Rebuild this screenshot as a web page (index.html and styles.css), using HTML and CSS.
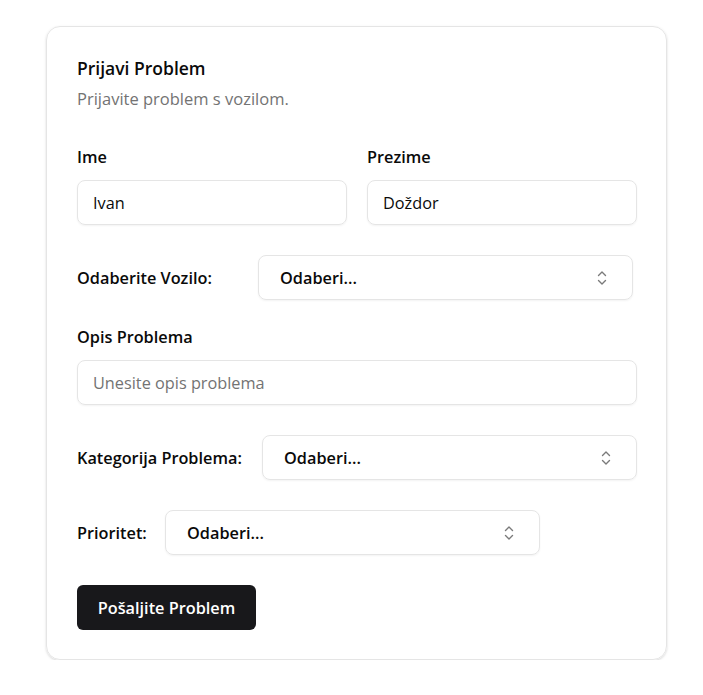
FILE: index.html
```html
<!DOCTYPE html>
<html lang="hr">
<head>
<meta charset="utf-8">
<link rel="stylesheet" href="styles.css">
</head>
<body>
<div class="card">
  <div class="header">
    <h1 class="title">Prijavi Problem</h1>
    <p class="subtitle">Prijavite problem s vozilom.</p>
  </div>
  <div class="row-two">
    <div class="field">
      <label class="label">Ime</label>
      <div class="input">Ivan</div>
    </div>
    <div class="field">
      <label class="label">Prezime</label>
      <div class="input">Doždor</div>
    </div>
  </div>
  <div class="select-row r-vozilo">
    <span class="label-inline">Odaberite Vozilo:</span>
    <div class="select"><span>Odaberi...</span>
      <svg class="chev" width="12" height="18" viewBox="0 0 12 18"><path d="M2.5 6.5 L6 3 L9.5 6.5 M2.5 11.5 L6 15 L9.5 11.5" fill="none" stroke="#7a7a7a" stroke-width="1.4" stroke-linecap="round" stroke-linejoin="round"/></svg>
    </div>
  </div>
  <div class="field f-opis">
    <label class="label">Opis Problema</label>
    <div class="input placeholder">Unesite opis problema</div>
  </div>
  <div class="select-row r-kat">
    <span class="label-inline">Kategorija Problema:</span>
    <div class="select"><span>Odaberi...</span>
      <svg class="chev" width="12" height="18" viewBox="0 0 12 18"><path d="M2.5 6.5 L6 3 L9.5 6.5 M2.5 11.5 L6 15 L9.5 11.5" fill="none" stroke="#7a7a7a" stroke-width="1.4" stroke-linecap="round" stroke-linejoin="round"/></svg>
    </div>
  </div>
  <div class="select-row r-prio">
    <span class="label-inline">Prioritet:</span>
    <div class="select"><span>Odaberi...</span>
      <svg class="chev" width="12" height="18" viewBox="0 0 12 18"><path d="M2.5 6.5 L6 3 L9.5 6.5 M2.5 11.5 L6 15 L9.5 11.5" fill="none" stroke="#7a7a7a" stroke-width="1.4" stroke-linecap="round" stroke-linejoin="round"/></svg>
    </div>
  </div>
  <button class="btn">Pošaljite Problem</button>
</div>
</body>
</html>
```

FILE: styles.css
```css
* { box-sizing: border-box; }
html, body { margin: 0; padding: 0; background: #fff; }
body {
  font-family: "Open Sans", "Noto Sans", sans-serif;
  color: #0a0a0a;
  padding: 26px 0 0 46px;
}
.card {
  width: 621px;
  height: 634px;
  border: 1px solid #e5e5e5;
  border-radius: 14px;
  box-shadow: 0 1px 3px rgba(0,0,0,0.10), 0 1px 2px rgba(0,0,0,0.06);
  padding: 29px 29px 29px 30px;
  display: flex;
  flex-direction: column;
}
.header { margin-bottom: 34px; }
.title {
  margin: 0;
  font-size: 17.5px;
  font-weight: 600;
  line-height: 24px;
}
.subtitle {
  margin: 7px 0 0;
  font-size: 16.5px;
  line-height: 24px;
  color: #737373;
}
.row-two {
  display: grid;
  grid-template-columns: 1fr 1fr;
  gap: 20px;
}
.field { display: flex; flex-direction: column; }
.label {
  font-size: 16.3px;
  font-weight: 600;
  line-height: 24px;
  margin-bottom: 11px;
}
.input {
  height: 45px;
  border: 1px solid #e5e5e5;
  border-radius: 8px;
  box-shadow: 0 1px 2px rgba(0,0,0,0.05);
  padding: 0 15px;
  display: flex;
  align-items: center;
  font-size: 16.3px;
}
.input.placeholder { color: #737373; }
.select-row {
  display: flex;
  align-items: center;
}
.r-vozilo { margin-top: 30px; }
.r-vozilo .label-inline { width: 181px; }
.f-opis { margin-top: 25px; }
.r-kat { margin-top: 30px; }
.r-kat .label-inline { width: 185px; }
.r-prio { margin-top: 30px; }
.r-prio .label-inline { width: 88px; }
.label-inline {
  font-size: 16.3px;
  font-weight: 600;
  line-height: 24px;
}
.select {
  width: 375px;
  height: 45px;
  border: 1px solid #e5e5e5;
  border-radius: 8px;
  box-shadow: 0 1px 2px rgba(0,0,0,0.05);
  padding: 0 24px 0 21px;
  display: flex;
  align-items: center;
  justify-content: space-between;
  font-size: 16.3px;
  font-weight: 600;
}
.chev { display: block; }
.btn {
  margin-top: 30px;
  align-self: flex-start;
  width: 179px;
  height: 45px;
  background: #18181b;
  color: #fff;
  border: none;
  border-radius: 6px;
  font-family: inherit;
  font-size: 16.3px;
  font-weight: 600;
  padding: 0;
}
```
